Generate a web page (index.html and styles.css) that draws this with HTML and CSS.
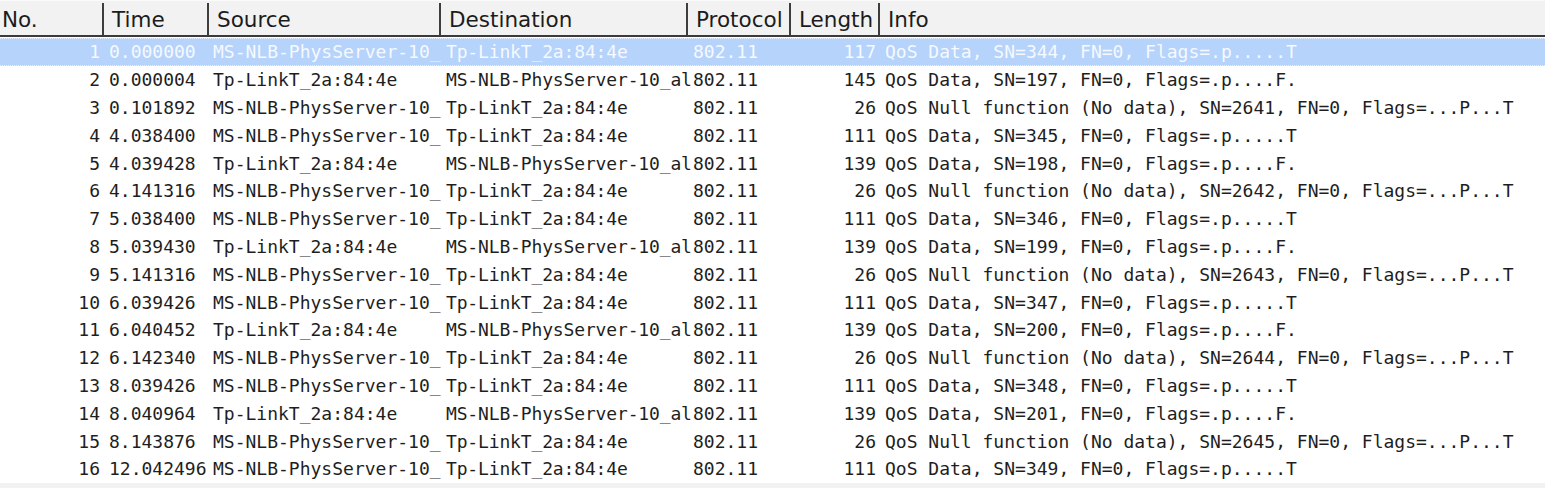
FILE: index.html
```html
<!DOCTYPE html>
<html>
<head>
<meta charset="utf-8">
<link rel="stylesheet" href="styles.css">
</head>
<body>
<div class="list">
  <div class="head">
    <div class="hc">No.</div>
    <div class="hc">Time</div>
    <div class="hc">Source</div>
    <div class="hc">Destination</div>
    <div class="hc">Protocol</div>
    <div class="hc">Length</div>
    <div class="hc last">Info</div>
  </div>
  <div class="rows">
    <div class="row sel"><span class="c num">1</span><span class="c">0.000000</span><span class="c src">MS-NLB-PhysServer-10_</span><span class="c dst">Tp-LinkT_2a:84:4e</span><span class="c">802.11</span><span class="c num">117</span><span class="c">QoS Data, SN=344, FN=0, Flags=.p.....T</span></div>
    <div class="row"><span class="c num">2</span><span class="c">0.000004</span><span class="c src">Tp-LinkT_2a:84:4e</span><span class="c dst">MS-NLB-PhysServer-10_al</span><span class="c">802.11</span><span class="c num">145</span><span class="c">QoS Data, SN=197, FN=0, Flags=.p....F.</span></div>
    <div class="row"><span class="c num">3</span><span class="c">0.101892</span><span class="c src">MS-NLB-PhysServer-10_</span><span class="c dst">Tp-LinkT_2a:84:4e</span><span class="c">802.11</span><span class="c num">26</span><span class="c">QoS Null function (No data), SN=2641, FN=0, Flags=...P...T</span></div>
    <div class="row"><span class="c num">4</span><span class="c">4.038400</span><span class="c src">MS-NLB-PhysServer-10_</span><span class="c dst">Tp-LinkT_2a:84:4e</span><span class="c">802.11</span><span class="c num">111</span><span class="c">QoS Data, SN=345, FN=0, Flags=.p.....T</span></div>
    <div class="row"><span class="c num">5</span><span class="c">4.039428</span><span class="c src">Tp-LinkT_2a:84:4e</span><span class="c dst">MS-NLB-PhysServer-10_al</span><span class="c">802.11</span><span class="c num">139</span><span class="c">QoS Data, SN=198, FN=0, Flags=.p....F.</span></div>
    <div class="row"><span class="c num">6</span><span class="c">4.141316</span><span class="c src">MS-NLB-PhysServer-10_</span><span class="c dst">Tp-LinkT_2a:84:4e</span><span class="c">802.11</span><span class="c num">26</span><span class="c">QoS Null function (No data), SN=2642, FN=0, Flags=...P...T</span></div>
    <div class="row"><span class="c num">7</span><span class="c">5.038400</span><span class="c src">MS-NLB-PhysServer-10_</span><span class="c dst">Tp-LinkT_2a:84:4e</span><span class="c">802.11</span><span class="c num">111</span><span class="c">QoS Data, SN=346, FN=0, Flags=.p.....T</span></div>
    <div class="row"><span class="c num">8</span><span class="c">5.039430</span><span class="c src">Tp-LinkT_2a:84:4e</span><span class="c dst">MS-NLB-PhysServer-10_al</span><span class="c">802.11</span><span class="c num">139</span><span class="c">QoS Data, SN=199, FN=0, Flags=.p....F.</span></div>
    <div class="row"><span class="c num">9</span><span class="c">5.141316</span><span class="c src">MS-NLB-PhysServer-10_</span><span class="c dst">Tp-LinkT_2a:84:4e</span><span class="c">802.11</span><span class="c num">26</span><span class="c">QoS Null function (No data), SN=2643, FN=0, Flags=...P...T</span></div>
    <div class="row"><span class="c num">10</span><span class="c">6.039426</span><span class="c src">MS-NLB-PhysServer-10_</span><span class="c dst">Tp-LinkT_2a:84:4e</span><span class="c">802.11</span><span class="c num">111</span><span class="c">QoS Data, SN=347, FN=0, Flags=.p.....T</span></div>
    <div class="row"><span class="c num">11</span><span class="c">6.040452</span><span class="c src">Tp-LinkT_2a:84:4e</span><span class="c dst">MS-NLB-PhysServer-10_al</span><span class="c">802.11</span><span class="c num">139</span><span class="c">QoS Data, SN=200, FN=0, Flags=.p....F.</span></div>
    <div class="row"><span class="c num">12</span><span class="c">6.142340</span><span class="c src">MS-NLB-PhysServer-10_</span><span class="c dst">Tp-LinkT_2a:84:4e</span><span class="c">802.11</span><span class="c num">26</span><span class="c">QoS Null function (No data), SN=2644, FN=0, Flags=...P...T</span></div>
    <div class="row"><span class="c num">13</span><span class="c">8.039426</span><span class="c src">MS-NLB-PhysServer-10_</span><span class="c dst">Tp-LinkT_2a:84:4e</span><span class="c">802.11</span><span class="c num">111</span><span class="c">QoS Data, SN=348, FN=0, Flags=.p.....T</span></div>
    <div class="row"><span class="c num">14</span><span class="c">8.040964</span><span class="c src">Tp-LinkT_2a:84:4e</span><span class="c dst">MS-NLB-PhysServer-10_al</span><span class="c">802.11</span><span class="c num">139</span><span class="c">QoS Data, SN=201, FN=0, Flags=.p....F.</span></div>
    <div class="row"><span class="c num">15</span><span class="c">8.143876</span><span class="c src">MS-NLB-PhysServer-10_</span><span class="c dst">Tp-LinkT_2a:84:4e</span><span class="c">802.11</span><span class="c num">26</span><span class="c">QoS Null function (No data), SN=2645, FN=0, Flags=...P...T</span></div>
    <div class="row"><span class="c num">16</span><span class="c">12.042496</span><span class="c src">MS-NLB-PhysServer-10_</span><span class="c dst">Tp-LinkT_2a:84:4e</span><span class="c">802.11</span><span class="c num">111</span><span class="c">QoS Data, SN=349, FN=0, Flags=.p.....T</span></div>
  </div>
  <div class="hscroll"></div>
</div>
</body>
</html>
```

FILE: styles.css
```css
html, body {
  margin: 0;
  padding: 0;
  background: #ffffff;
}

.list {
  width: 1545px;
  height: 488px;
  overflow: hidden;
  display: flex;
  flex-direction: column;
}

.head,
.row {
  display: grid;
  grid-template-columns: 104px 105px 232px 247px 103px 89px 1fr;
}

.head {
  height: 35px;
  background: #f2f2f2;
  border-top: 1px solid #fafafa;
  border-bottom: 2px solid #3a3a3a;
  font-family: "DejaVu Sans", sans-serif;
  font-size: 21.5px;
  color: #1c1c1c;
}

.hc {
  display: flex;
  align-items: center;
  padding-left: 8px;
  border-right: 2px solid #3e3e3e;
  white-space: nowrap;
  overflow: hidden;
  margin: 2px 0 0 0;
}

.hc:first-child {
  padding-left: 2px;
}

.hc.last {
  border-right: none;
}

.rows {
  padding-top: 1px;
  flex: 1;
}

.row {
  height: 27.8px;
  line-height: 27.8px;
  font-family: "DejaVu Sans Mono", monospace;
  font-size: 18px;
  color: #1e1e1e;
  box-sizing: border-box;
}

.c {
  padding-left: 5px;
  white-space: nowrap;
  overflow: hidden;
}

.c.src {
  padding-left: 4px;
}

.c.dst {
  overflow: visible;
  letter-spacing: -0.15px;
}

.c.num {
  padding-left: 0;
  padding-right: 4px;
  text-align: right;
}

.row.sel {
  background: #b5d3fb;
  color: #f6f9ff;
  border-top: 1px dotted #e6efff;
  border-bottom: 1px dotted #e6efff;
  line-height: 25.8px;
}

.hscroll {
  height: 5px;
  background: #f2f2f2;
}
```
